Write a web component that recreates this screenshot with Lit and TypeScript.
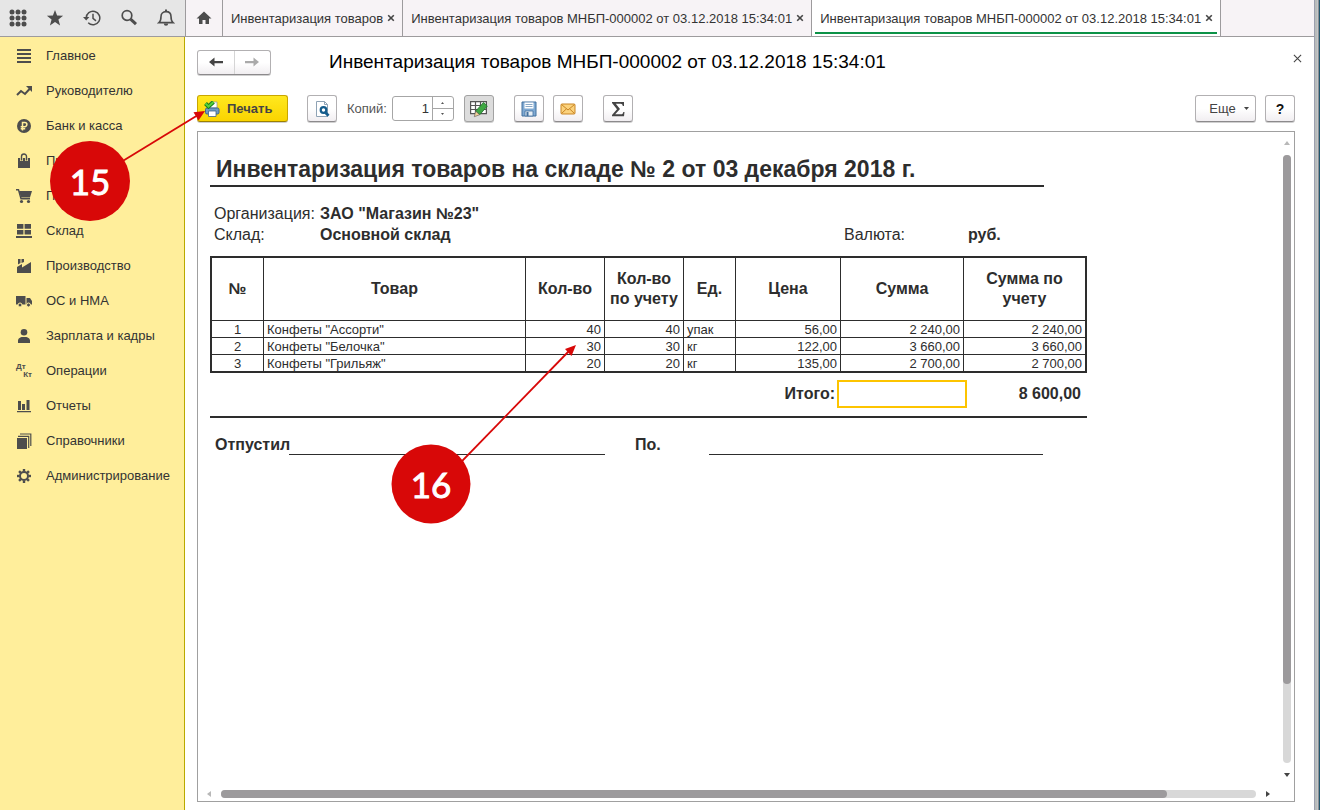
import { LitElement, html, css, svg, nothing } from "lit";
import { customElement, state } from "lit/decorators.js";

const G = "#4d4d4d";

const icons: Record<string, unknown> = {
  apps: svg`${[3, 9, 15].map((y) => [3, 9, 15].map((x) => svg`<circle cx=${x} cy=${y} r="2.5" fill=${G}/>`))}`,
  star: svg`<path fill=${G} d="M9 1l2.1 5.6 6 .2-4.7 3.7 1.7 5.9L9 13l-5.1 3.4 1.7-5.9L.9 6.8l6-.2z"/>`,
  clock: svg`<g fill="none" stroke=${G} stroke-width="1.5"><path d="M3.2 9a6.8 6.8 0 1 1 2 4.8"/><path d="M10 4.8V9.4l3 2.4"/></g><path fill=${G} d="M0 8h6.4L3.2 11.6z"/>`,
  search: svg`<circle cx="7" cy="6.5" r="4.8" fill="none" stroke=${G} stroke-width="1.7"/><path d="M10.6 10.2l5.4 5" stroke=${G} stroke-width="3"/>`,
  bell: svg`<path fill="none" stroke=${G} stroke-width="1.6" d="M2 13.6c2-1.6 2-3 2-6 0-3 2-5 5-5s5 2 5 5c0 3 0 4.400 2 6z"/><path fill=${G} d="M8 .6h2v2H8zM6.800 14.500h4.400a2.200 2.200 0 0 1-4.400 0z"/>`,
  home: svg`<path fill=${G} d="M9 2.500l7.500 7H14V15h-3.500v-4h-3v4H4V9.500H1.500z"/>`,
  list: svg`<path stroke=${G} stroke-width="2" d="M1 2h14M1 6h14M1 10h14M1 14h14"/>`,
  trend: svg`<path fill="none" stroke=${G} stroke-width="2" d="M1 12l4-4 4 3 5-5.500"/><path fill=${G} d="M10 3h6v6z"/>`,
  ruble: svg`<circle cx="8" cy="8" r="7" fill=${G}/><path fill="none" stroke="#ffee9b" stroke-width="1.500" d="M6.500 12.500V4.500h2.300a2.100 2.100 0 0 1 0 4.200H4.700M4.700 10.700h4.500"/>`,
  bag: svg`<path fill=${G} d="M2 5h12v10H2z"/><path fill="none" stroke="#ffee9b" stroke-width="2.800" d="M5.500 8V4.500M10.500 8V4.500"/><path fill="none" stroke=${G} stroke-width="1.400" d="M5.500 7.500V3.500a2.500 2.500 0 0 1 5 0v4"/>`,
  cart: svg`<path fill="none" stroke=${G} stroke-width="1.400" d="M0 1.700h2.500l2.500 9h9"/><path fill=${G} d="M3 3h13l-2 6.500H5z"/><circle cx="5.500" cy="13.500" r="1.600" fill=${G}/><circle cx="12.500" cy="13.500" r="1.600" fill=${G}/>`,
  store: svg`<path fill=${G} d="M1 1h6.400v4.800H1zM8.600 1H15v4.800H8.600zM1 7h6.400v4.500H1zM8.600 7H15v4.500H8.600zM0 13h16v2H0z"/>`,
  factory: svg`<path fill=${G} d="M1 15V9l5-3v3.500L15 4v11zM2 1h2.500v4L2 6.500zM5.500 1H8v3l-2.500 1z"/>`,
  truck: svg`<path fill=${G} d="M0 3h9.500v8.500H0zM10.500 5h3.500l2 3v3.500h-5.500z"/><g fill=${G} stroke="#ffee9b"><circle cx="4" cy="12" r="2"/><circle cx="12.500" cy="12" r="2"/></g>`,
  person: svg`<circle cx="8" cy="4.300" r="3.300" fill=${G}/><path fill=${G} d="M2 15v-2.500C2 10 5 9.200 6 9h4c1 .2 4 1 4 3.500V15z"/>`,
  bars: svg`<path fill=${G} d="M2 3h3v9H2zM6 6h3v6H6zM10.500 2h3v10h-3zM1 13h14v1.200H1z"/>`,
  books: svg`<path fill=${G} d="M1 5h10v11H1z"/><path fill="none" stroke=${G} stroke-width="1.200" d="M2 3.300h10.700V15M4 1h10.800v12"/>`,
  gear: svg`<circle cx="8" cy="8" r="4" fill="none" stroke=${G} stroke-width="2"/>${[0, 45, 90, 135, 180, 225, 270, 315].map((a) => svg`<path transform="rotate(${a} 8 8)" stroke=${G} stroke-width="2.400" d="M8 1v2.500"/>`)}`,
  back: svg`<path fill="#444" d="M1 8l5.500-4.500V7H15v2.200H6.500v3.300z"/>`,
  forward: svg`<path fill="#aaa" d="M15 8L9.500 3.500V7H1v2.200h8.500v3.300z"/>`,
  printer: svg`<path fill="#fff" stroke="#999" stroke-width=".8" d="M6 1h7v6H6z"/><rect x="1.500" y="7" width="13.500" height="6" rx="1.500" fill="#6d9bc3" stroke="#3f648b"/><path fill="#fff" stroke="#3f648b" stroke-width=".8" d="M4.500 10h7.500v5.500H4.500z"/><path fill="none" stroke="#177d19" stroke-width="4" d="M1.500 2.500l3 3 5-4.500"/><path fill="none" stroke="#55d13b" stroke-width="2" d="M1.500 2.500l3 3 5-4.500"/>`,
  preview: svg`<path fill="#fff" stroke="#8fa3b5" d="M2.500.5h8l3 3v12h-11z"/><path fill="none" stroke="#8fa3b5" d="M10.500.5v3h3"/><circle cx="9.500" cy="9" r="2.800" fill="#fff" stroke="#145c8c" stroke-width="2.200"/><path stroke="#145c8c" stroke-width="2.800" d="M11.300 11.300l3.200 3.400"/>`,
  edit: svg`<path fill="#fff" stroke="#555" stroke-width="1.200" d="M.6 1.600h15.800v12H.6zM.6 5.500h15.800M.6 9.500h15.800M5.500 1.600v12M10.500 1.600v12"/><path fill="#3fa843" stroke="#1d6e2b" stroke-width=".8" d="M13.500 2.500l3.800 3.500-7.500 8.700-4.200-3.500z"/><path fill="#f4d29a" stroke="#555" stroke-width=".6" d="M5.600 11.200l4.200 3.500-5.500 2z"/>`,
  save: svg`<path fill="#7fa9d2" stroke="#42709e" d="M1 1h14v14H1z"/><path fill="#fff" d="M3.500 1.500h9v6h-9z"/><path stroke="#8aa9c6" d="M4.500 3.500h7M4.500 5.500h7"/><path fill="#e6eef5" stroke="#42709e" stroke-width=".8" d="M4 10h8v5H4z"/><path fill="#42709e" d="M5.500 11h2v4h-2z"/>`,
  mail: svg`<rect x="1" y="3" width="14" height="10" rx="1" fill="#fbd27c" stroke="#c98524"/><path fill="none" stroke="#c98524" d="M1.500 3.500L8 9l6.500-5.500M1.500 12.500l5-4.700M14.500 12.500l-5-4.700"/>`,
  sum: svg`<path fill="#444" d="M2 1h12v4h-1.200C12.500 3.500 12 2.800 10.500 2.800H5.800L10 8l-4.800 5.300h5.800c1.500 0 2-.8 2.300-2.300h1.200L14 15.200H2V14l5-5.800L2 2z"/>`,
  cross: svg`<path stroke="#444" stroke-width="2" d="M1.500 1.500l7 7M8.500 1.500l-7 7"/>`,
  thinCross: svg`<path stroke="#444" stroke-width="1.200" d="M1 1l8 8M9 1l-8 8"/>`,
};

const icon = (name: string, size = 16, box = 16) =>
  html`<svg class="icon" width=${size} height=${size} viewBox="0 0 ${box} ${box}" aria-hidden="true">${icons[name]}</svg>`;

const sections: [string, string][] = [
  ["list", "Главное"],
  ["trend", "Руководителю"],
  ["ruble", "Банк и касса"],
  ["bag", "Продажи"],
  ["cart", "Покупки"],
  ["store", "Склад"],
  ["factory", "Производство"],
  ["truck", "ОС и НМА"],
  ["person", "Зарплата и кадры"],
  ["dtkt", "Операции"],
  ["bars", "Отчеты"],
  ["books", "Справочники"],
  ["gear", "Администрирование"],
];

const docName = "Инвентаризация товаров МНБП-000002 от 03.12.2018 15:34:01";
const tabs = ["Инвентаризация товаров", docName, docName];

const rows = [
  ["1", 'Конфеты "Ассорти"', "40", "40", "упак", "56,00", "2 240,00", "2 240,00"],
  ["2", 'Конфеты "Белочка"', "30", "30", "кг", "122,00", "3 660,00", "3 660,00"],
  ["3", 'Конфеты "Грильяж"', "20", "20", "кг", "135,00", "2 700,00", "2 700,00"],
];
const cellKinds = ["mid", "", "num", "num", "", "num", "num", "num"];

const base = css`
  * { box-sizing: border-box; }
  button, input { font: inherit; color: inherit; }
  button { padding: 0; border: 0; background: none; }
  .icon { display: block; flex: none; }
`;

@customElement("top-bar")
class TopBar extends LitElement {
  static styles = [base, css`
    :host { display: flex; height: 37px; border-bottom: 1px solid #9d9b9d; background: #f7f3f6; font-size: 13px; }
    .tools { display: flex; flex: none; width: 186px; padding-right: 1px; background: #e6e6e6; border-right: 1px solid #9d9b9d; }
    .tools button, .home { flex: 1; display: grid; place-items: center; }
    .home { flex: none; width: 37px; border-right: 1px solid #9d9b9d; }
    .tab { display: flex; flex: none; align-items: center; gap: 2px; padding: 0 5px 0 8px; border-right: 1px solid #9d9b9d; }
    .tab.active { position: relative; background: #fff; }
    .tab.active::after { content: ""; position: absolute; left: 3px; right: 3px; bottom: 2px; height: 2px; background: #0c9247; }
    .name { white-space: nowrap; }
    .close { padding: 2px; }
  `];
  @state() active = 2;
  render() {
    return html`
      <div class="tools">
        ${[["apps", "Меню"], ["star", "Избранное"], ["clock", "История"], ["search", "Поиск"], ["bell", "Оповещения"]].map(
          ([n, t]) => html`<button aria-label=${t}>${icon(n, 18, 18)}</button>`)}
      </div>
      <button class="home" aria-label="Начальная страница">${icon("home", 18, 18)}</button>
      ${tabs.map((t, i) => html`
        <div class="tab ${i === this.active ? "active" : ""}">
          <button class="name" @click=${() => (this.active = i)}>${t}</button>
          <button class="close" aria-label="Закрыть">${icon("cross", 8, 10)}</button>
        </div>`)}
    `;
  }
}

@customElement("side-nav")
class SideNav extends LitElement {
  static styles = [base, css`
    :host { display: block; padding-top: 1px; background: #ffee9b; border-right: 1px solid #b9a900; font-size: 13px; }
    a { display: flex; align-items: center; gap: 14px; height: 35px; padding-left: 16px; color: #333; text-decoration: none; }
    .dtkt { display: grid; width: 16px; font-size: 8px; line-height: 8px; font-weight: bold; color: #4d4d4d; }
    .dtkt span:last-child { text-align: right; }
  `];
  render() {
    return html`<nav>${sections.map(([n, t]) => html`
      <a href="#">${n === "dtkt"
        ? html`<span class="dtkt" aria-hidden="true"><span>Дт</span><span>Кт</span></span>`
        : icon(n)}${t}</a>`)}</nav>`;
  }
}

@customElement("report-sheet")
class ReportSheet extends LitElement {
  static styles = [base, css`
    :host { display: grid; grid-template: minmax(0, 1fr) 14px / minmax(0, 1fr) 14px; border: 1px solid #a0a0a0; background: #fff; color: #2d2d2d; }
    .page { overflow: hidden; padding: 22px 12px; font-size: 16px; }
    .doc { width: 877px; }
    h2 { width: 834px; margin: 0 0 16px; padding: 0 6px; height: 33px; font-size: 23px; line-height: 30px; border-bottom: 2px solid #2d2d2d; white-space: nowrap; }
    dl { display: grid; grid-template-columns: 106px 524px 124px auto; margin: 0 0 11px; padding-left: 4px; line-height: 21px; }
    dt, dd { margin: 0; }
    dd { font-weight: bold; }
    .org { grid-column: 2 / -1; }
    table { width: 100%; table-layout: fixed; border: 2px solid #2d2d2d; border-spacing: 0; }
    th, td { padding: 0; border-left: 1px solid #2d2d2d; }
    th:first-child, td:first-child { border-left: 0; }
    th { height: 62px; line-height: 20px; }
    td { height: 17px; padding: 1px 3px 0; border-top: 1px solid #2d2d2d; font-size: 13px; line-height: 15px; white-space: nowrap; }
    .mid { text-align: center; }
    .num { text-align: right; }
    .total { display: grid; grid-template-columns: 625px 130px 1fr; gap: 2px; align-items: center; margin-top: 7px; padding-right: 6px; font-weight: bold; text-align: right; }
    .cell { height: 28px; border: 2px solid #fdc400; }
    .signs { display: grid; grid-template-columns: 74px 316px 30px 74px 334px; margin-top: 8px; padding: 17px 0 0 5px; border-top: 2px solid #2d2d2d; font-weight: bold; line-height: 20px; white-space: nowrap; }
    .line { border-bottom: 1px solid #2d2d2d; }
    .bar { display: flex; align-items: center; }
    .v { flex-direction: column; padding: 7px 0 8px; }
    .h { padding: 0 8px 0 7px; }
    .arrow { flex: none; display: grid; place-items: center; width: 8px; height: 8px; }
    .track { flex: 1; display: flex; border-radius: 4px; background: #d8d8d8; }
    .v .track { flex-direction: column; width: 8px; margin: 8px 0; }
    .h .track { height: 8px; margin: 0 8px; }
    .thumb { border-radius: 4px; background: #9c9a9c; }
    .v .thumb { height: 87%; }
    .h .thumb { width: 91.4%; }
  `];
  arrow(d: string, fill: string) {
    return html`<span class="arrow"><svg class="icon" width="6" height="6" viewBox="0 0 6 6"><path d=${d} fill=${fill}/></svg></span>`;
  }
  render() {
    return html`
      <div class="page"><div class="doc">
        <h2>Инвентаризация товаров на складе № 2 от 03 декабря 2018 г.</h2>
        <dl>
          <dt>Организация:</dt><dd class="org">ЗАО "Магазин №23"</dd>
          <dt>Склад:</dt><dd>Основной склад</dd>
          <dt>Валюта:</dt><dd>руб.</dd>
        </dl>
        <table>
          <colgroup>${[51, 262, 79, 79, 52, 105, 123, 122].map((w) => html`<col width=${w}>`)}</colgroup>
          <thead><tr>
            <th>№</th><th>Товар</th><th>Кол-во</th><th>Кол-во<br>по учету</th><th>Ед.</th><th>Цена</th><th>Сумма</th><th>Сумма по<br>учету</th>
          </tr></thead>
          <tbody>${rows.map((r) => html`<tr>${r.map((c, i) => html`<td class=${cellKinds[i] || nothing}>${c}</td>`)}</tr>`)}</tbody>
        </table>
        <div class="total"><span>Итого:</span><span class="cell"></span><span>8 600,00</span></div>
        <div class="signs"><span>Отпустил</span><span class="line"></span><span></span><span>По.</span><span class="line"></span></div>
      </div></div>
      <div class="bar v">
        ${this.arrow("M0 5L3 1l3 4z", "#b8b8b8")}
        <div class="track"><div class="thumb"></div></div>
        ${this.arrow("M0 1h6L3 5z", "#444")}
      </div>
      <div class="bar h">
        ${this.arrow("M5 0v6L1 3z", "#b8b8b8")}
        <div class="track"><div class="thumb"></div></div>
        ${this.arrow("M1 0v6l4-3z", "#444")}
      </div>
    `;
  }
}

@customElement("app-root")
class AppRoot extends LitElement {
  static styles = [base, css`
    :host { position: relative; display: grid; grid-template: auto minmax(0, 1fr) / 185px minmax(0, 1fr) 6px; height: 100vh; overflow: hidden; background: #fff; color: #333; font-family: "Liberation Sans", Arial, sans-serif; font-size: 13px; }
    top-bar { grid-column: 1 / 3; min-width: 0; }
    .edge { grid-column: 3; grid-row: 1 / 3; background: linear-gradient(90deg, #9b9fae 1px, #b9bcbb 1px 3px, #c3c6cb 3px 4px, #8d8f92 4px 5px, #20566f 5px); }
    main { display: flex; flex-direction: column; padding: 12px 19px 8px 12px; }
    header { display: flex; align-items: center; height: 26px; }
    h1 { flex: 1; margin: 0 0 0 58px; font-size: 19px; font-weight: normal; color: #000; white-space: nowrap; }
    .leave { align-self: flex-start; padding: 5px; margin: 0 -12px 0 0; }
    .btn { display: grid; place-items: center; flex: none; width: 30px; height: 27px; border: 1px solid #b2b0b2; border-bottom-color: #8c8a8c; border-radius: 3px; background: linear-gradient(#fff 50%, #f1eef1); box-shadow: 0 1px 0 #d0d0d0; }
    .pair { display: flex; width: 74px; height: 25px; }
    .pair button { flex: 1; display: grid; place-items: center; height: 100%; }
    .pair button + button { border-left: 1px solid #d5d5d5; }
    .toolbar { display: flex; align-items: center; margin: 20px 0 9px; height: 27px; }
    .print { display: flex; gap: 7px; width: 91px; padding-left: 6px; margin-right: 19px; border-color: #c9a600; border-bottom-color: #9c8000; background: linear-gradient(#ffe81f, #fad400); color: #444; font-weight: bold; }
    label { margin: 0 5px 0 10px; color: #555; }
    .spin { display: grid; grid-template-columns: 1fr 21px; width: 62px; height: 25px; margin-right: 10px; border: 1px solid #a6a6a6; border-radius: 3px; overflow: hidden; }
    .spin input { min-width: 0; border: 0; outline: 0; padding: 0 3px; text-align: right; background: none; }
    .steps { display: grid; border-left: 1px solid #a6a6a6; }
    .steps button { display: grid; place-items: center; }
    .steps button + button { border-top: 1px solid #a6a6a6; }
    .pressed { background: #dcdcdc; border-color: #a2a2a2; }
    .gap { margin-left: 20px; }
    .near { margin-left: 9px; }
    .more { display: flex; justify-content: center; align-items: center; gap: 8px; width: 61px; padding-left: 7px; margin-left: auto; color: #444; }
    .help { margin-left: 9px; font-weight: bold; font-size: 14px; color: #111; }
    report-sheet { flex: 1; min-height: 0; }
    .callouts { position: absolute; inset: 0; pointer-events: none; }
    .callouts text { font-family: Lato, "Open Sans", sans-serif; font-size: 35px; fill: #fff; stroke: #fff; stroke-width: 1px; text-anchor: middle; }
  `];
  step(points: string) {
    return html`<svg class="icon" width="5" height="3" viewBox="0 0 5 3"><path d=${points} fill="#555"/></svg>`;
  }
  render() {
    return html`
      <top-bar></top-bar>
      <div class="edge"></div>
      <side-nav></side-nav>
      <main>
        <header>
          <div class="btn pair"><button aria-label="Назад">${icon("back")}</button><button aria-label="Вперед">${icon("forward")}</button></div>
          <h1>${docName}</h1>
          <button class="leave" aria-label="Закрыть форму">${icon("thinCross", 9, 10)}</button>
        </header>
        <div class="toolbar">
          <button class="btn print">${icon("printer")}Печать</button>
          <button class="btn" aria-label="Предварительный просмотр">${icon("preview")}</button>
          <label for="copies">Копий:</label>
          <div class="spin">
            <input id="copies" type="text" inputmode="numeric" .value=${"1"}>
            <div class="steps"><button aria-label="Больше">${this.step("M1 3l1.500-2L4 3z")}</button><button aria-label="Меньше">${this.step("M1 0h3L2.500 2z")}</button></div>
          </div>
          <button class="btn pressed" aria-label="Редактирование">${icon("edit", 18, 18)}</button>
          <button class="btn gap" aria-label="Сохранить">${icon("save")}</button>
          <button class="btn near" aria-label="Отправить">${icon("mail")}</button>
          <button class="btn gap" aria-label="Сумма">${icon("sum")}</button>
          <button class="btn more">Еще <svg class="icon" width="5" height="3" viewBox="0 0 5 3"><path d="M0 0h5L2.500 3z" fill="#444"/></svg></button>
          <button class="btn help" aria-label="Справка">?</button>
        </div>
        <report-sheet></report-sheet>
      </main>
      <svg class="callouts" width="1320" height="810" viewBox="0 0 1320 810">
        <g stroke="#d80808" stroke-width="1.800"><path d="M90 181L198 115"/><path d="M431 493L569 351"/></g>
        <g fill="#d80808">
          <path d="M205 111l-6.500 9.500-5-8.300z"/><path d="M576 345l-4.500 11-6.500-7z"/>
          <circle cx="90" cy="181" r="40"/><circle cx="431" cy="484" r="39.500"/>
        </g>
        <text x="90" y="195">15</text><text x="431" y="498">16</text>
      </svg>
    `;
  }
}
